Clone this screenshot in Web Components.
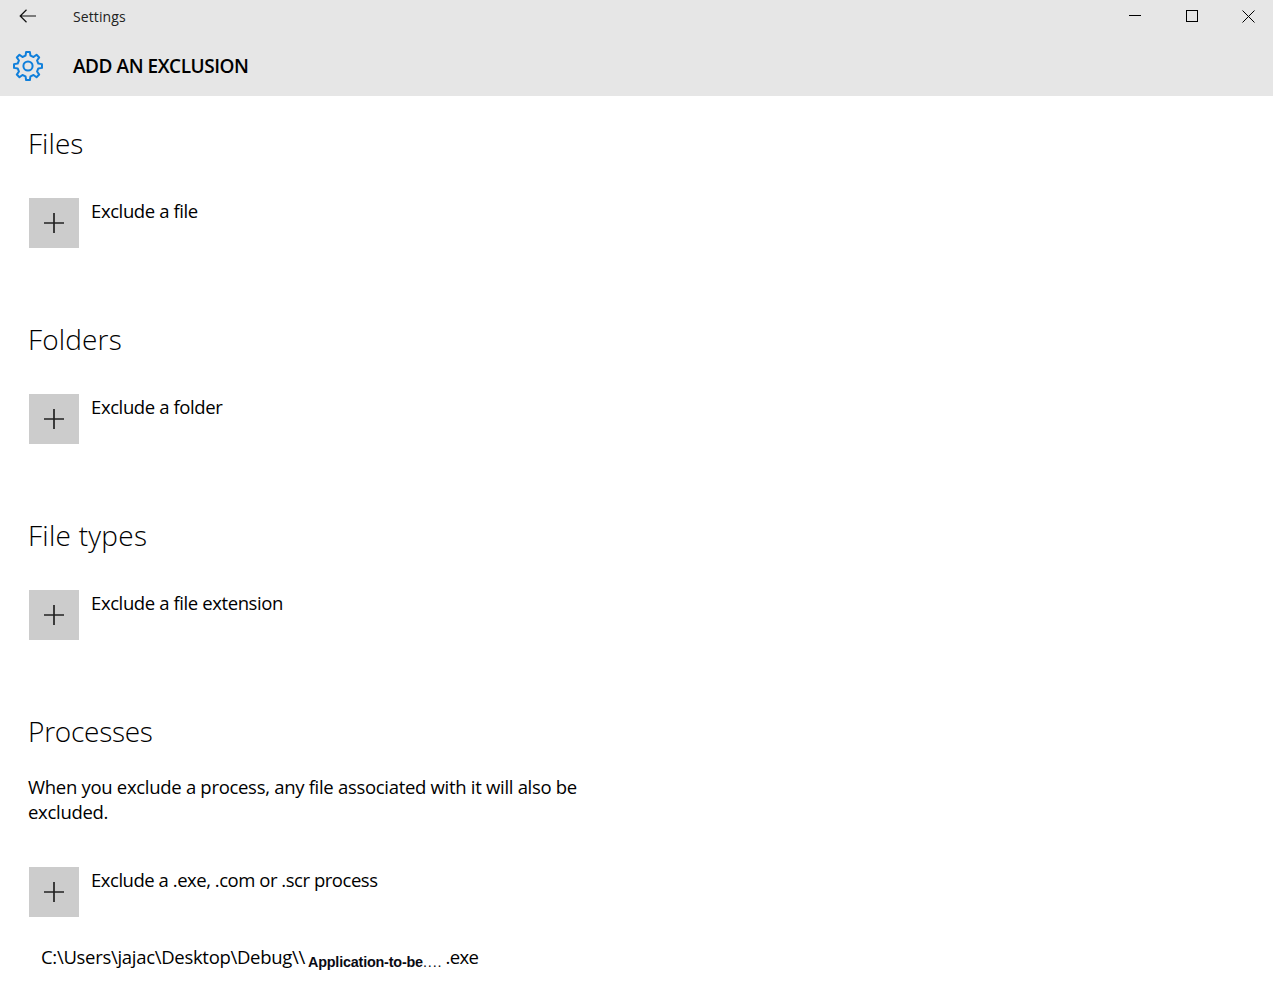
<!DOCTYPE html>
<html>
<head>
<meta charset="utf-8">
<title>Settings</title>
<style>
  html, body { margin: 0; padding: 0; background: #fff; }
  body { font-family: "Open Sans", "Noto Sans", sans-serif; color: #000; }
  exclusion-path i { font-style: normal; font-weight: 400; letter-spacing: 0.9px; }
</style>
</head>
<body>
<settings-titlebar title-text="Settings" page="ADD AN EXCLUSION"></settings-titlebar>
<settings-page>
  <exclusion-section style="--heading-spacing:0.05px" heading="Files" label="Exclude a file"></exclusion-section>
  <exclusion-section style="--heading-spacing:0.15px" heading="Folders" label="Exclude a folder"></exclusion-section>
  <exclusion-section style="--heading-spacing:0.25px" heading="File types" label="Exclude a file extension"></exclusion-section>
  <exclusion-section style="--label-spacing:-0.47px;--heading-spacing:-0.25px" heading="Processes" label="Exclude a .exe, .com or .scr process" note="When you exclude a process, any file associated with it will also be excluded."></exclusion-section>
  <exclusion-path>
    <span>C:\Users\jajac\Desktop\Debug\\</span><small>Application-to-be<i>....</i></small><span class="ext">.exe</span>
  </exclusion-path>
</settings-page>
<script>
function gearPath(cx, cy, outer, inner, teeth) {
  let d = '';
  const step = Math.PI * 2 / teeth;
  for (let i = 0; i < teeth; i++) {
    const a = i * step - Math.PI / 2;
    const pts = [
      [inner, a - step * 0.30],
      [outer, a - step * 0.17],
      [outer, a + step * 0.17],
      [inner, a + step * 0.30]
    ];
    pts.forEach((p, j) => {
      const x = (cx + p[0] * Math.cos(p[1])).toFixed(2);
      const y = (cy + p[0] * Math.sin(p[1])).toFixed(2);
      d += (i === 0 && j === 0 ? 'M' : 'L') + x + ' ' + y + ' ';
    });
  }
  return d + 'Z';
}

class SettingsTitlebar extends HTMLElement {
  constructor() {
    super();
    this.attachShadow({ mode: 'open' });
  }
  connectedCallback() {
    this.shadowRoot.innerHTML = `
      <style>
        :host { display: block; height: 96px; background: #e6e6e6; color: #000; overflow: hidden; }
        .top { display: flex; align-items: center; height: 32px; }
        .back { width: 73px; padding-left: 19px; box-sizing: border-box; display: flex; }
        .title { flex: 1; font-size: 14px; color: #222; letter-spacing: 0.1px; }
        .controls { display: flex; margin-right: -4px; }
        .controls button { width: 57px; height: 32px; border: 0; padding: 0; background: none; display: flex; align-items: center; justify-content: center; }
        .page { display: flex; align-items: center; height: 64px; padding-top: 4px; box-sizing: border-box; }
        .gear { width: 73px; padding-left: 12px; box-sizing: border-box; display: flex; }
        .name { font-size: 19px; font-weight: 600; letter-spacing: -0.45px; }
        svg { display: block; }
      </style>
      <div class="top">
        <div class="back">
          <svg width="18" height="14" viewBox="0 0 18 14" fill="none" stroke="#111" stroke-width="1.2"><path d="M1 7H17M7.5 .8L1.2 7L7.5 13.2"/></svg>
        </div>
        <div class="title">${this.getAttribute('title-text')}</div>
        <div class="controls">
          <button><svg width="12" height="12" viewBox="0 0 12 12" stroke="#000" fill="none"><path d="M0 5.5H12"/></svg></button>
          <button><svg width="12" height="12" viewBox="0 0 12 12" stroke="#000" fill="none"><rect x=".5" y=".5" width="11" height="11"/></svg></button>
          <button><svg width="13" height="13" viewBox="0 0 13 13" stroke="#000" fill="none"><path d="M.5 .5L12.5 12.5M12.5 .5L.5 12.5"/></svg></button>
        </div>
      </div>
      <div class="page">
        <div class="gear">
          <svg width="32" height="32" viewBox="0 0 32 32" fill="none" stroke="#0f7fdb" stroke-width="2" stroke-linejoin="round">
            <path d="${gearPath(16, 16, 14.1, 10.6, 8)}"/>
            <circle cx="16" cy="16" r="4.6"/>
          </svg>
        </div>
        <div class="name">${this.getAttribute('page')}</div>
      </div>
    `;
  }
}
customElements.define('settings-titlebar', SettingsTitlebar);

class SettingsPage extends HTMLElement {
  constructor() {
    super();
    this.attachShadow({ mode: 'open' });
    this.shadowRoot.innerHTML = `
      <style>
        :host { display: block; padding: 29px 0 0 28px; }
      </style>
      <slot></slot>
    `;
  }
}
customElements.define('settings-page', SettingsPage);

class ExclusionSection extends HTMLElement {
  constructor() {
    super();
    this.attachShadow({ mode: 'open' });
  }
  connectedCallback() {
    const note = this.getAttribute('note');
    this.shadowRoot.innerHTML = `
      <style>
        :host { display: block; height: 196px; color: #000; }
        :host([note]) { height: auto; }
        h2 { margin: 0; font-size: 28px; font-weight: 300; line-height: 36px; letter-spacing: var(--heading-spacing, 0); color: #000; }
        p { margin: 25px 0 0; width: 560px; font-size: 18.5px; line-height: 25px; letter-spacing: -0.3px; }
        .row { display: flex; gap: 12px; margin: 37px 0 0 1px; }
        :host([note]) .row { margin-top: 43px; }
        .add { width: 50px; height: 50px; background: #cccccc; display: flex; align-items: center; justify-content: center; flex: none; }
        .label { font-size: 18.5px; line-height: 26px; letter-spacing: var(--label-spacing, -0.4px); }
      </style>
      <h2>${this.getAttribute('heading')}</h2>
      ${note ? `<p>${note}</p>` : ''}
      <div class="row">
        <div class="add">
          <svg width="20" height="20" viewBox="0 0 20 20" stroke="#222" stroke-width="1.7"><path d="M0 10H20M10 0V20"/></svg>
        </div>
        <div class="label">${this.getAttribute('label')}</div>
      </div>
    `;
  }
}
customElements.define('exclusion-section', ExclusionSection);

class ExclusionPath extends HTMLElement {
  constructor() {
    super();
    this.attachShadow({ mode: 'open' });
    this.shadowRoot.innerHTML = `
      <style>
        :host { display: block; margin: 27px 0 0 13px; font-size: 18.5px; line-height: 26px; letter-spacing: -0.3px; white-space: nowrap; }
        ::slotted(small) { font-family: "Liberation Sans", sans-serif; font-size: 14.4px; font-weight: 700; letter-spacing: -0.2px; margin: 0 3px 0 3px; position: relative; top: 3px; color: #0a0a14; }
        ::slotted(.ext) { letter-spacing: -0.6px; }
      </style>
      <slot></slot>
    `;
  }
}
customElements.define('exclusion-path', ExclusionPath);
</script>
</body>
</html>
